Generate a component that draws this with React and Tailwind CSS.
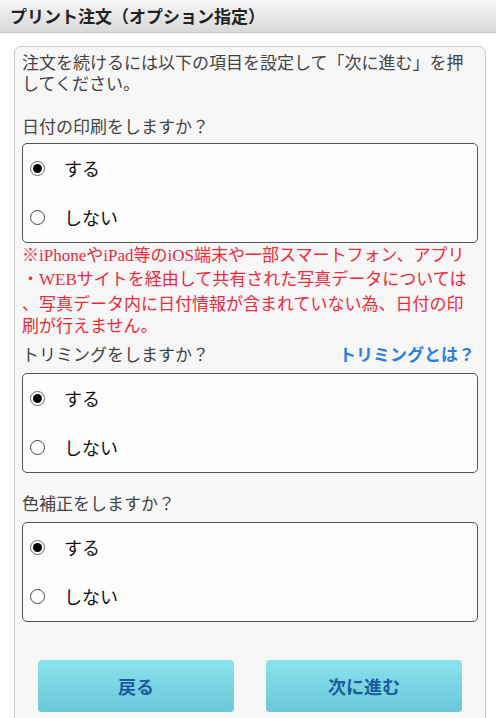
import { useState } from "react";

const FONT = { fontFamily: '"Noto Sans CJK JP", "Noto Sans", sans-serif' };
const SERIF = { fontFamily: '"Liberation Serif", serif' };

function Radio({ checked }) {
  if (checked) {
    return (
      <span className="flex w-[15px] h-[15px] shrink-0 items-center justify-center rounded-full border-[1.5px] border-[#666] bg-white">
        <span className="w-[9px] h-[9px] rounded-full bg-black" />
      </span>
    );
  }
  return (
    <span className="block w-[15px] h-[15px] shrink-0 rounded-full border-[1.5px] border-[#444] bg-white" />
  );
}

function Choice({ name, value, onChange }) {
  const options = [
    { key: "yes", label: "する" },
    { key: "no", label: "しない" },
  ];
  return (
    <div className="rounded-[5px] border-[1.5px] border-[#555] bg-[#fdfdfd]">
      {options.map((o) => (
        <label
          key={o.key}
          className="flex h-[49px] cursor-pointer items-center pl-[7px]"
          onClick={() => onChange(name, o.key)}
        >
          <Radio checked={value === o.key} />
          <span className="ml-[19px] text-[18px] text-[#111]">{o.label}</span>
        </label>
      ))}
    </div>
  );
}

export default function App() {
  const [form, setForm] = useState({
    date: "yes",
    trim: "yes",
    color: "yes",
  });

  const handleChange = (name, value) => {
    setForm({ ...form, [name]: value });
  };

  return (
    <div className="min-h-[718px] bg-white" style={FONT}>
      {/* ヘッダー */}
      <div className="flex h-[33px] items-center border-b border-[#c8c8c8] bg-gradient-to-b from-[#f6f6f6] to-[#d9d9d9] px-[10px]">
        <h1 className="text-[17px] font-bold text-[#222]">
          プリント注文（オプション指定）
        </h1>
      </div>

      <div className="pl-[14px] pr-[10px] pt-[13px]">
        <div className="rounded-t-[7px] border border-[#c9c9c9] bg-[#f7f7f7] px-[7px] pt-[4px] pb-[6px]">
          <p className="text-[17px] leading-[21px] text-[#444]">
            注文を続けるには以下の項目を設定して「次に進む」を押してください。
          </p>

          {/* 日付 */}
          <p className="mt-[22px] mb-[7px] text-[17px] leading-[21px] text-[#444]">
            日付の印刷をしますか？
          </p>
          <Choice name="date" value={form.date} onChange={handleChange} />
          <p className="text-[17px] leading-[22.3px] text-[#f02a3a]">
            <span className="block whitespace-nowrap">
              ※<span style={SERIF}>iPhone</span>や<span style={SERIF}>iPad</span>等の
              <span style={SERIF}>iOS</span>端末や一部スマートフォン、アプリ
            </span>
            <span className="block whitespace-nowrap">
              ・<span style={SERIF}>WEB</span>サイトを経由して共有された写真データについては
            </span>
            <span className="block whitespace-nowrap">
              、写真データ内に日付情報が含まれていない為、日付の印
            </span>
            <span className="block whitespace-nowrap">刷が行えません。</span>
          </p>

          {/* トリミング */}
          <div className="mt-[7px] mb-[9px] flex items-center justify-between pr-[3px]">
            <p className="text-[17px] leading-[21px] text-[#444]">
              トリミングをしますか？
            </p>
            <a href="#" className="text-[17px] leading-[21px] font-bold text-[#2b7fe3]">
              トリミングとは？
            </a>
          </div>
          <Choice name="trim" value={form.trim} onChange={handleChange} />

          {/* 色補正 */}
          <p className="mt-[19px] mb-[9px] text-[17px] leading-[21px] text-[#444]">
            色補正をしますか？
          </p>
          <Choice name="color" value={form.color} onChange={handleChange} />

          {/* ボタン */}
          <div className="mt-[38px] flex gap-8 px-4">
            <button className="h-[52px] flex-1 rounded-[4px] bg-gradient-to-b from-[#8ae2ee] to-[#6ac6d8] text-[18px] font-bold text-[#1a5c9c]">
              戻る
            </button>
            <button className="h-[52px] flex-1 rounded-[4px] bg-gradient-to-b from-[#8ae2ee] to-[#6ac6d8] text-[18px] font-bold text-[#1a5c9c]">
              次に進む
            </button>
          </div>
        </div>
      </div>
    </div>
  );
}
